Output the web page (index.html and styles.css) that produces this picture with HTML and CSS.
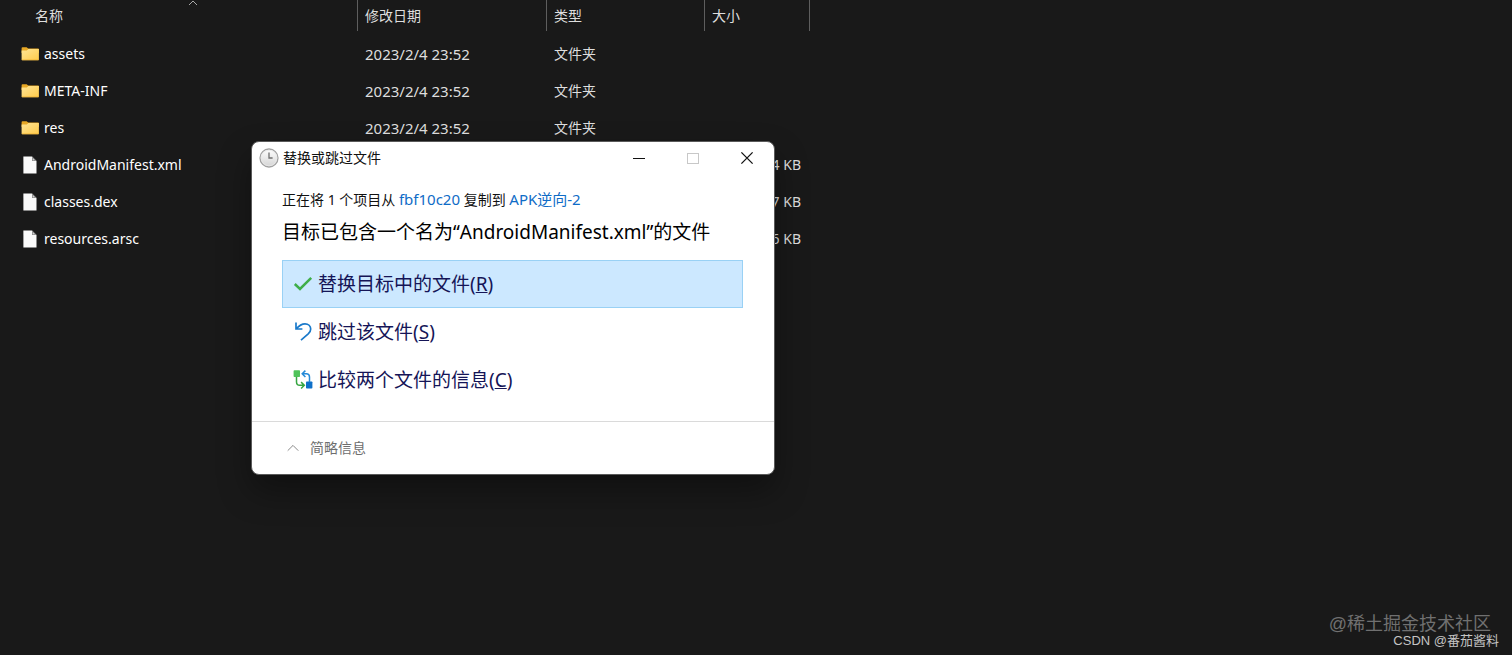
FILE: index.html
```html
<!DOCTYPE html>
<html lang="zh-CN">
<head>
<meta charset="utf-8">
<meta name="viewport" content="width=device-width, initial-scale=1">
<title>替换或跳过文件</title>
<link rel="stylesheet" href="styles.css">
</head>
<body>
<svg class="defs" aria-hidden="true">
  <defs>
    <linearGradient id="folder-fill" x1="0" y1="0" x2="1" y2="1">
      <stop offset="0" stop-color="#ffe596"/>
      <stop offset="1" stop-color="#ffcb4a"/>
    </linearGradient>
    <linearGradient id="clock-fill" x1="0" y1="0" x2="0" y2="1">
      <stop offset="0" stop-color="#ffffff"/>
      <stop offset="1" stop-color="#d4d4d4"/>
    </linearGradient>
    <symbol id="folder" viewBox="0 0 18 16">
      <path d="M.6 2.2Q.6 1.2 1.6 1.2H5.6L7.2 2.6H17.2Q17.9 2.6 17.9 3.4V7H.6Z" fill="#e8a825"/>
      <path d="M.6 4.4H5.8L7.4 3H17.9V13.4Q17.9 14.2 17.1 14.2H1.4Q.6 14.2 .6 13.4Z" fill="url(#folder-fill)"/>
      <path d="M.8 13.8H17.7" stroke="#f0b537" stroke-width=".7"/>
    </symbol>
    <symbol id="file" viewBox="0 0 18 18">
      <path d="M2.4 .6H11L15.5 5.1V17.4H2.4Z" fill="#fafafa"/>
      <path d="M11 .6V5.1H15.5Z" fill="#8c8c8c"/>
      <path d="M11.8 2.5V4.3H13.6Z" fill="#e4e4e4"/>
    </symbol>
  </defs>
</svg>
<main class="explorer">
  <table class="files">
    <colgroup><col class="col-name"><col class="col-date"><col class="col-type"><col class="col-size"></colgroup>
    <thead>
      <tr>
        <th class="name-head"><button type="button">名称</button><svg class="sort" viewBox="0 0 10 6"><path d="M1 5L5 1L9 5"/></svg></th>
        <th><button type="button">修改日期</button></th>
        <th><button type="button">类型</button></th>
        <th><button type="button">大小</button></th>
      </tr>
    </thead>
    <tbody>
      <tr><td><span class="entry"><svg><use href="#folder"/></svg>assets</span></td><td class="date">2023/2/4 23:52</td><td>文件夹</td><td></td></tr>
      <tr><td><span class="entry"><svg><use href="#folder"/></svg>META-INF</span></td><td class="date">2023/2/4 23:52</td><td>文件夹</td><td></td></tr>
      <tr><td><span class="entry"><svg><use href="#folder"/></svg>res</span></td><td class="date">2023/2/4 23:52</td><td>文件夹</td><td></td></tr>
      <tr><td><span class="entry"><svg><use href="#file"/></svg>AndroidManifest.xml</span></td><td></td><td></td><td>4 KB</td></tr>
      <tr><td><span class="entry"><svg><use href="#file"/></svg>classes.dex</span></td><td></td><td></td><td>7 KB</td></tr>
      <tr><td><span class="entry"><svg><use href="#file"/></svg>resources.arsc</span></td><td></td><td></td><td>6 KB</td></tr>
    </tbody>
  </table>

  <section class="dialog" role="dialog" aria-labelledby="dialog-title">
    <header class="titlebar">
      <svg class="clock" viewBox="0 0 20 20"><circle cx="10" cy="10" r="9" fill="url(#clock-fill)" stroke="#a2a2a2" stroke-width="1.3"/><circle cx="10" cy="10" r="7.8" fill="none" stroke="#e8e8e8" stroke-width=".8"/><path d="M10 4.5V10H13.6" fill="none" stroke="#707070" stroke-width="1.3"/></svg>
      <span class="title" id="dialog-title">替换或跳过文件</span>
      <button type="button" aria-label="最小化"><svg viewBox="0 0 14 14"><path d="M1 7.5H13"/></svg></button>
      <button type="button" aria-label="最大化" disabled><svg viewBox="0 0 14 14"><rect x="1.5" y="2.5" width="11" height="10"/></svg></button>
      <button type="button" aria-label="关闭"><svg viewBox="0 0 14 14"><path d="M1.4 1.4L12.6 12.6M12.6 1.4L1.4 12.6" stroke-width="1.3"/></svg></button>
    </header>
    <div class="content">
      <p class="route">正在将 1 个项目从 <a href="#">fbf10c20</a> 复制到 <a href="#">APK逆向-2</a></p>
      <h1>目标已包含一个名为“AndroidManifest.xml”的文件</h1>
      <div class="options">
        <button type="button" class="option selected"><svg viewBox="0 0 20 20"><path d="M1.8 10L7 15L18.2 3.8" fill="none" stroke="#3fae49" stroke-width="2.5"/></svg><span>替换目标中的文件(<u>R</u>)</span></button>
        <button type="button" class="option"><svg viewBox="0 0 20 20"><path d="M3 .6V7H9.4M3.2 6.8C6.2 3.4 8.8 1.8 12 1.8C15.4 1.8 17.7 4 17.7 6.9C17.7 9 16.8 10.4 15.2 11.9L8 18.2" fill="none" stroke="#1979ca" stroke-width="1.7"/></svg><span>跳过该文件(<u>S</u>)</span></button>
        <button type="button" class="option"><svg viewBox="0 0 20 20"><rect x=".6" y=".2" width="6.4" height="6.8" rx=".8" fill="#4fc35a"/><rect x="13" y="11.5" width="6.4" height="7" rx=".8" fill="#0f70c9"/><path d="M3.5 7V12Q3.5 15.3 6.8 15.3H10.5M8.1 12.1L11.3 15.3L8.1 18.5" fill="none" stroke="#36a541" stroke-width="1.5"/><path d="M16.5 12V7Q16.5 3.8 13.3 3.8H9.8M12.4 .6L9.2 3.8L12.4 7" fill="none" stroke="#258ad8" stroke-width="1.5"/></svg><span>比较两个文件的信息(<u>C</u>)</span></button>
      </div>
    </div>
    <footer><button type="button" class="less"><svg viewBox="0 0 12 8"><path d="M.7 6.7L6 1.4L11.3 6.7"/></svg>简略信息</button></footer>
  </section>

  <div class="credits"><span class="community">@稀土掘金技术社区</span><span class="author">CSDN @番茄酱料</span></div>
</main>
</body>
</html>
```
FILE: styles.css
```css
* { box-sizing: border-box; }

body {
  margin: 0;
  background: #191919;
  color: #dedede;
  font: 14px/20px "Noto Sans", "Noto Sans CJK SC", sans-serif;
}

button {
  padding: 0;
  border: 0;
  background: none;
  color: inherit;
  font: inherit;
}

.defs { position: absolute; width: 0; height: 0; }

.explorer { position: relative; min-height: 100vh; overflow: hidden; }

/* File list */
.files { width: 810px; table-layout: fixed; border-collapse: separate; border-spacing: 0; }
.col-name { width: 358px; }
.col-date { width: 189px; }
.col-type { width: 158px; }
.col-size { width: 105px; }

.files th { position: relative; height: 35px; padding: 0 0 4px; font-weight: 400; }
.files th button {
  display: block;
  width: 100%;
  height: 31px;
  padding: 0 7px;
  border-right: 1px solid #5e5e5e;
  text-align: left;
}
.files .name-head button { padding-left: 35px; }
.sort {
  position: absolute;
  top: 0;
  left: 188px;
  width: 10px;
  height: 6px;
  fill: none;
  stroke: #a8a8a8;
}

.files td { height: 37px; padding: 0 7px; white-space: nowrap; }
.files td:first-child { padding-left: 21px; color: #fff; }
.files td:last-child { padding-right: 9px; text-align: right; }
.files .date { font-size: 15px; }
.entry { display: flex; align-items: center; gap: 5px; }
.entry svg { width: 18px; height: 18px; }

/* Conflict dialog */
.dialog {
  position: absolute;
  top: 141px;
  left: 251px;
  width: 524px;
  border: 1px solid #5a5a5a;
  border-radius: 8px;
  background: #fff;
  color: #111;
  box-shadow: 0 16px 32px rgba(0, 0, 0, .35);
}

.titlebar { display: flex; align-items: center; height: 32px; padding-left: 7px; }
.titlebar .clock { width: 20px; height: 20px; }
.title { flex: 1; padding-left: 4px; }
.titlebar button { display: grid; place-items: center; width: 54px; height: 32px; }
.titlebar button svg { width: 14px; height: 14px; fill: none; stroke: #111; }
.titlebar button:disabled svg { stroke: #c8c8c8; }

.content { padding: 15px 31px 17px 30px; }
.route { margin: 0 0 8px; }
.route a { color: #0f6cc7; font-size: 15px; text-decoration: none; }
h1 { margin: 0 0 14px; color: #000; font-size: 19px; font-weight: 400; line-height: 28px; white-space: nowrap; }

.option {
  display: flex;
  align-items: center;
  gap: 5px;
  width: 100%;
  height: 48px;
  padding: 0 10px;
  border: 1px solid transparent;
  color: #151557;
  font-size: 19px;
  text-align: left;
}
.option.selected { border-color: #99d1f5; background: #cce8ff; }
.option svg { width: 20px; height: 20px; }

footer { padding: 16px 35px; border-top: 1px solid #dadada; }
.less { display: flex; align-items: center; gap: 11px; color: #6e6e6e; }
.less svg { width: 12px; height: 8px; fill: none; stroke: #8a8a8a; }

/* Image credits */
.credits {
  position: absolute;
  right: 13px;
  bottom: 5px;
  display: flex;
  flex-direction: column;
  align-items: flex-end;
  font-family: "Liberation Sans", "Noto Sans CJK SC", sans-serif;
}
.community { padding-right: 8px; color: #707070; font-size: 18px; line-height: 16px; }
.author { color: #c4c4c4; font-size: 13px; line-height: 18px; }
```
